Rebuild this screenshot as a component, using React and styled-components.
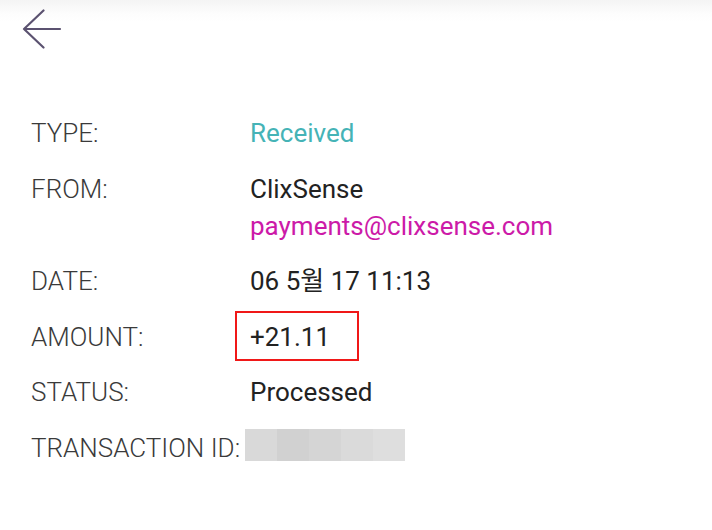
import React from "react"
import styled, { createGlobalStyle } from "styled-components"

const GlobalStyle = createGlobalStyle`
  html, body {
    margin: 0;
    padding: 0;
    background: #fff;
  }

  body {
    font-family: Roboto, "Noto Sans CJK KR", sans-serif;
  }
`

const Page = styled.div`
  width: 712px;
  height: 530px;
  background: #fff;
  overflow: hidden;
`

const TopBar = styled.header`
  height: 58px;
  padding-left: 22px;
  display: flex;
  align-items: flex-start;
  padding-top: 9px;
  box-sizing: border-box;
  background: linear-gradient(to bottom, #f4f4f4 0px, #fdfdfd 14px, #fff 22px);
`

const BackButton = styled.button`
  border: 0;
  padding: 0;
  background: none;
  width: 40px;
  height: 40px;
  cursor: pointer;
`

const Details = styled.section`
  padding: 61px 0 0 31px;
  display: flex;
  flex-direction: column;
  gap: 27.6px;
`

const Row = styled.div`
  display: flex;
  align-items: flex-start;
  font-size: 26px;
  line-height: 28px;
`

const Label = styled.div`
  width: ${props => (props.$auto ? "auto" : "219px")};
  flex-shrink: 0;
  white-space: nowrap;
  font-weight: 300;
  color: #3a3a3a;
`

const Value = styled.div`
  position: relative;
  color: ${props => props.$color || "#222"};
  font-weight: 400;
`

const SubValue = styled.div`
  margin-top: 9px;
  color: #cc1aa8;
`

const Highlight = styled.span`
  position: absolute;
  left: -15px;
  top: -12px;
  width: 124px;
  height: 50px;
  box-sizing: border-box;
  border: 2px solid #f01818;
`

const Redacted = styled.div`
  display: flex;
  margin: -5px 0 0 5px;
  height: 32px;
`

const Pixel = styled.span`
  width: 32px;
  height: 32px;
  background: ${props => props.$shade};
`

const shades = ["#d9d9d9", "#d1d1d1", "#d5d5d5", "#dadada", "#dedede"]

const BackArrow = () => (
  <svg width="40" height="40" viewBox="0 0 40 40" fill="none">
    <path
      d="M38 20H2M21.5 1.5L2 20l19.5 18.5"
      stroke="#5b5270"
      strokeWidth="2.2"
      strokeLinecap="round"
      strokeLinejoin="round"
    />
  </svg>
)

const App = () => (
  <Page>
    <GlobalStyle />
    <TopBar>
      <BackButton aria-label="Back">
        <BackArrow />
      </BackButton>
    </TopBar>
    <Details>
      <Row>
        <Label>TYPE:</Label>
        <Value $color="#45b3b6">Received</Value>
      </Row>
      <Row>
        <Label>FROM:</Label>
        <Value>
          ClixSense
          <SubValue>payments@clixsense.com</SubValue>
        </Value>
      </Row>
      <Row>
        <Label>DATE:</Label>
        <Value>06 5월 17 11:13</Value>
      </Row>
      <Row>
        <Label>AMOUNT:</Label>
        <Value>
          +21.11
          <Highlight />
        </Value>
      </Row>
      <Row>
        <Label>STATUS:</Label>
        <Value>Processed</Value>
      </Row>
      <Row>
        <Label $auto>TRANSACTION ID:</Label>
        <Redacted>
          {shades.map((s, i) => (
            <Pixel key={i} $shade={s} />
          ))}
        </Redacted>
      </Row>
    </Details>
  </Page>
)

export default App
